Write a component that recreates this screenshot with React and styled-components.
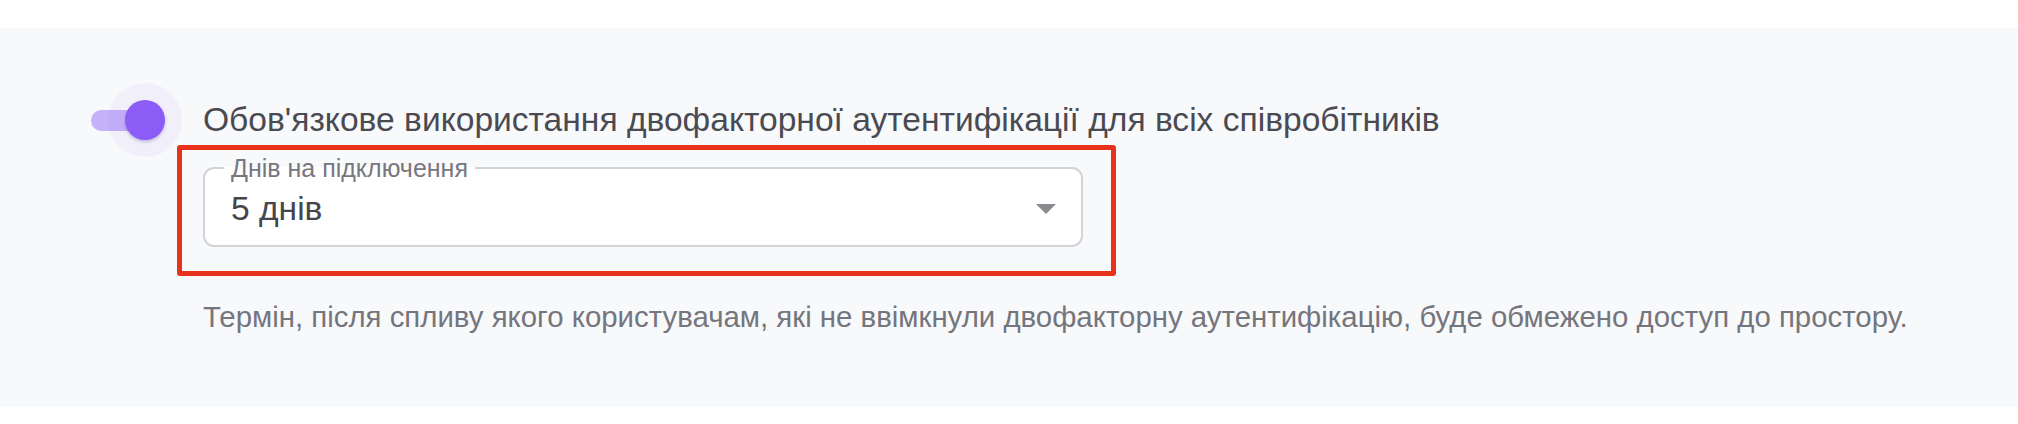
import React, { useState } from "react";
import styled, { createGlobalStyle } from "styled-components";

const GlobalStyle = createGlobalStyle`
  html, body {
    margin: 0;
    padding: 0;
    background: #ffffff;
  }
  body {
    font-family: "Liberation Sans", Arial, sans-serif;
  }
`;

const options = ["1 день", "3 дні", "5 днів", "7 днів", "14 днів"];

const App = () => {
  const [enabled, setEnabled] = useState(true);
  const [days] = useState(options[2]);

  return (
    <>
      <GlobalStyle />
      <Page>
        <Section>
          <Row>
            <Switch
              role="switch"
              aria-checked={enabled}
              onClick={() => setEnabled(!enabled)}
            >
              <Track $on={enabled} />
              <Thumb $on={enabled} />
            </Switch>
            <Content>
              <Label>
                Обов'язкове використання двофакторної аутентифікації для всіх
                співробітників
              </Label>
              <Highlight>
                <SelectBox>
                  <Legend>Днів на підключення</Legend>
                  <SelectRow>
                    <Value>{days}</Value>
                    <Arrow />
                  </SelectRow>
                </SelectBox>
              </Highlight>
              <Description>
                Термін, після спливу якого користувачам, які не ввімкнули
                двофакторну аутентифікацію, буде обмежено доступ до простору.
              </Description>
            </Content>
          </Row>
        </Section>
      </Page>
    </>
  );
};

export default App;

//* styled-components
const Page = styled.div`
  padding-top: 28px;
  height: 424px;
  box-sizing: border-box;
`;

const Section = styled.section`
  height: 379px;
  box-sizing: border-box;
  padding: 72px 0 0 91px;
  background-color: #f8f9fb;
`;

const Row = styled.div`
  display: flex;
  align-items: flex-start;
  gap: 46px;
`;

const Switch = styled.div`
  position: relative;
  display: flex;
  align-items: center;
  width: 66px;
  height: 40px;
  flex-shrink: 0;
  cursor: pointer;
`;

const Track = styled.div`
  width: 66px;
  height: 21px;
  border-radius: 11px;
  background-color: ${(props) => (props.$on ? "#c5b2fb" : "#cfcfd6")};
`;

const Thumb = styled.div`
  position: absolute;
  top: 0;
  left: ${(props) => (props.$on ? "34px" : "-8px")};
  width: 40px;
  height: 40px;
  border-radius: 50%;
  background-color: ${(props) => (props.$on ? "#8b5cf6" : "#ffffff")};
  box-shadow: 0 0 0 17px rgba(139, 92, 246, 0.06),
    0 2px 3px rgba(60, 30, 140, 0.25);
`;

const Content = styled.div`
  display: flex;
  flex-direction: column;
`;

const Label = styled.div`
  font-size: 33.6px;
  line-height: 40px;
  color: #4a4a52;
  white-space: nowrap;
`;

const Highlight = styled.div`
  align-self: flex-start;
  margin: 5px 0 0 -26px;
  padding: 4px 28px 24px 21px;
  border: 5px solid #e8331c;
  border-radius: 3px;
`;

const SelectBox = styled.fieldset`
  margin: 0;
  width: 880px;
  box-sizing: border-box;
  padding: 0 25px 10px 26px;
  border: 2px solid #d2d2d7;
  border-radius: 11px;
  background-color: #ffffff;
  min-inline-size: 0;
`;

const Legend = styled.legend`
  padding: 0 7px;
  margin-left: -7px;
  font-size: 25px;
  line-height: 28px;
  color: #77777f;
`;

const SelectRow = styled.div`
  display: flex;
  align-items: center;
  justify-content: space-between;
  height: 53px;
`;

const Value = styled.span`
  font-size: 33.6px;
  color: #45454d;
`;

const Arrow = styled.span`
  width: 0;
  height: 0;
  border-left: 10.5px solid transparent;
  border-right: 10.5px solid transparent;
  border-top: 10px solid #8a8a8f;
`;

const Description = styled.div`
  margin-top: 23px;
  font-size: 29.4px;
  line-height: 36px;
  color: #75757d;
  white-space: nowrap;
`;
